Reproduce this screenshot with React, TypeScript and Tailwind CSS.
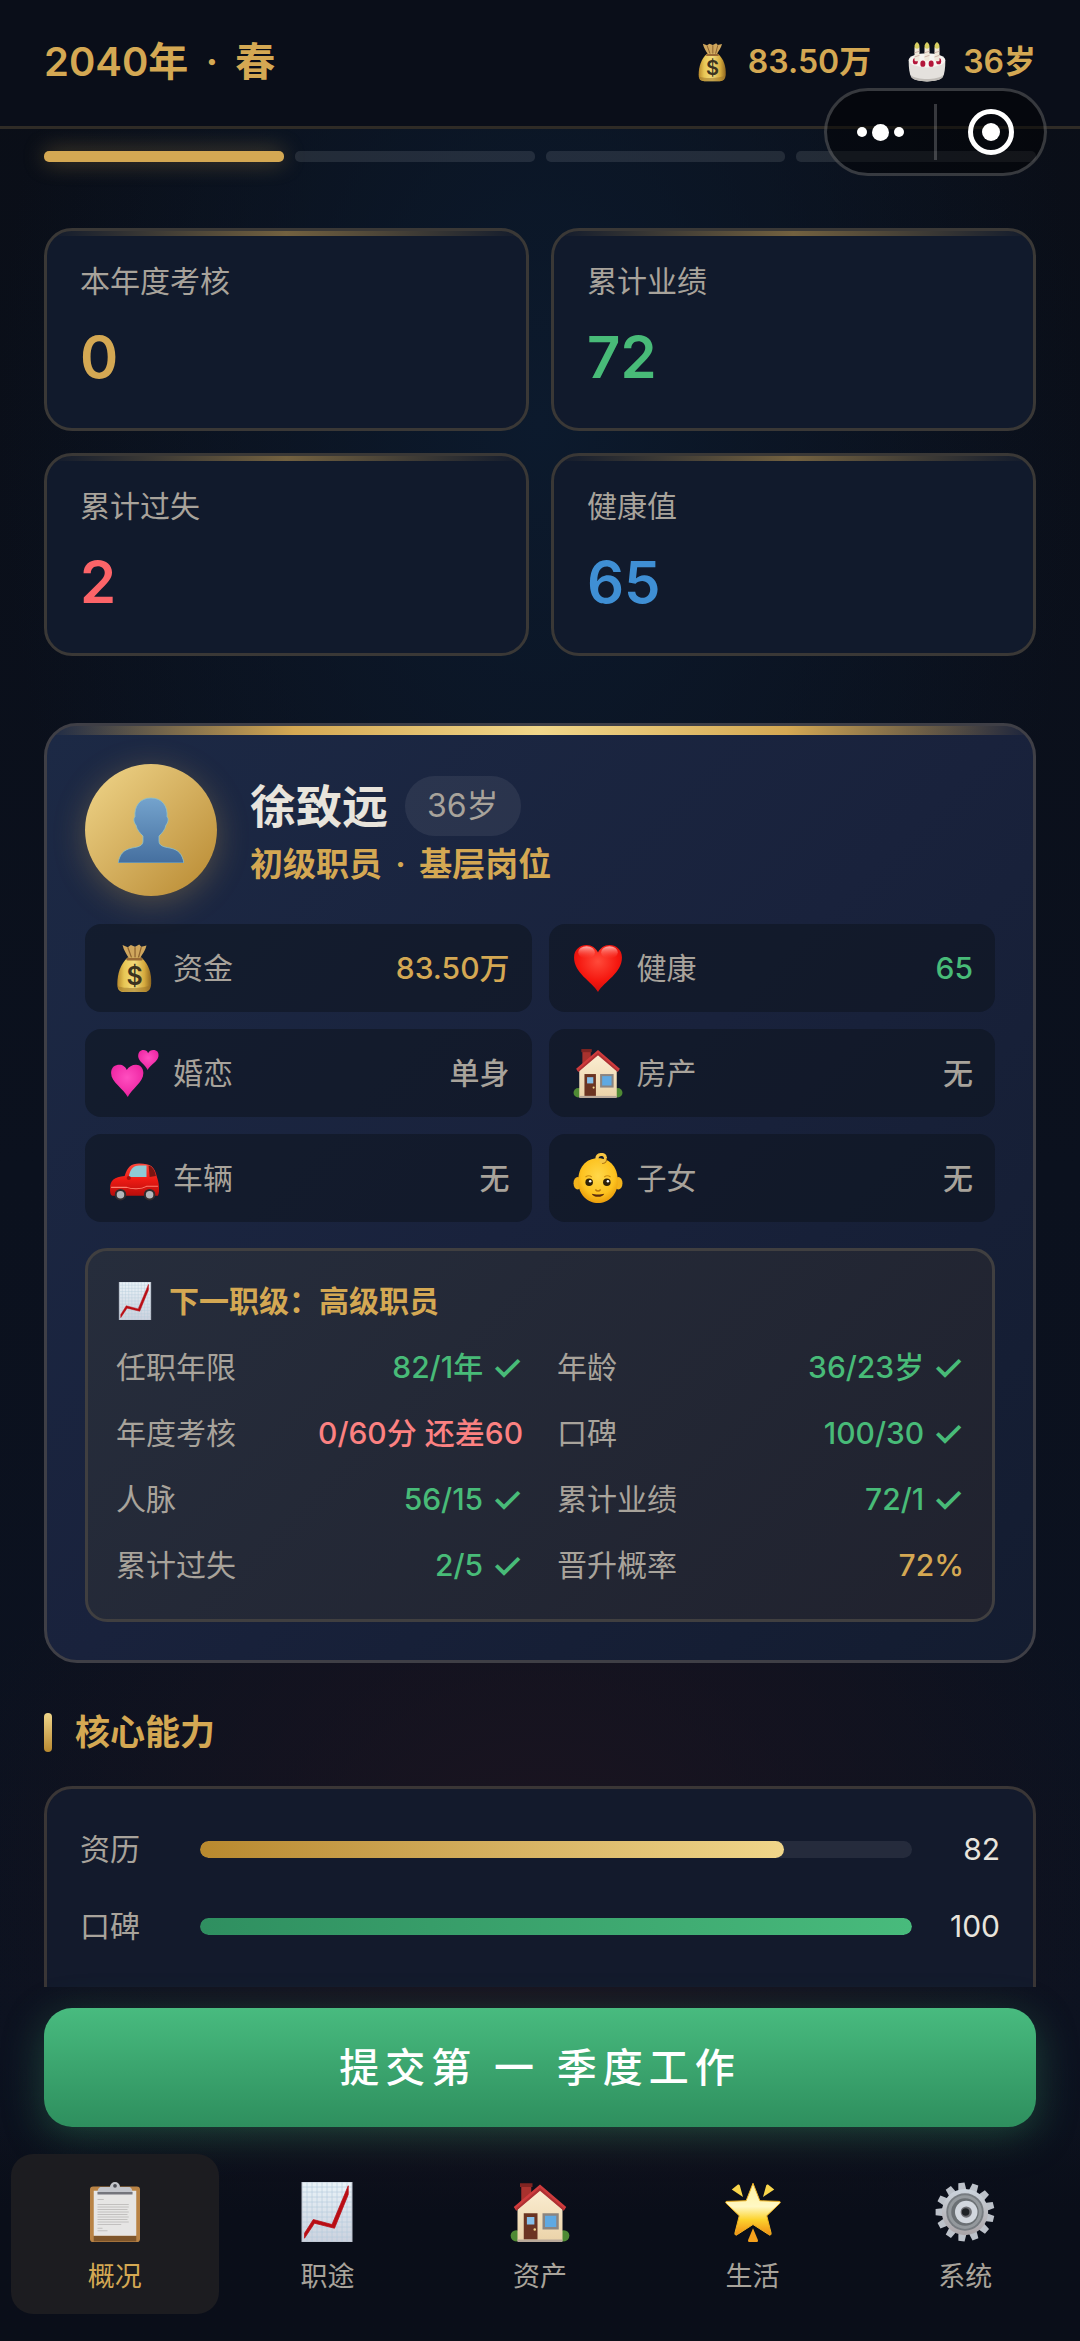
import React from "react";

type IconProps = { className?: string };

function MoneyBag({ className }: IconProps) {
  return (
    <svg viewBox="0 0 48 48" className={className} aria-hidden="true">
      <defs>
        <linearGradient id="bag" x1="0" x2="1" y1="0" y2="0">
          <stop offset="0" stopColor="#b98a2c" />
          <stop offset=".2" stopColor="#e8c654" />
          <stop offset=".5" stopColor="#f3dc7c" />
          <stop offset=".8" stopColor="#d5aa3d" />
          <stop offset="1" stopColor="#8f6620" />
        </linearGradient>
      </defs>
      <path d="M13 2l5 2 3-2 4 1.500 4-2 2 2 5-1c-1 5-4 8-6 12H19C17 11 14 7 13 2z" fill="#cfa65d" />
      <path d="M18 4l4 11M25 4v11M31 4l-3 11" stroke="#8d6330" strokeWidth="1.2" fill="none" />
      <path d="M18 14h13c7 6 10 15 9.500 25-.5 6-3 8-7 8H15c-5 0-7-2-7-8 0-9 3-19 10-25z" fill="url(#bag)" />
      <path d="M8 41c2 5 5 6 8 6h17c4 0 6-2 7-7-5 4-28 4-32 1z" fill="#9c742a" opacity=".55" />
      <path d="M18 15.500h13" stroke="#9a6a35" strokeWidth="2.500" strokeLinecap="round" />
      <text x="24.500" y="40" textAnchor="middle" fontSize="24" fontWeight="600" fill="#3b3320" className="font-[Inter,sans-serif]">$</text>
    </svg>
  );
}

function Cake({ className }: IconProps) {
  return (
    <svg viewBox="0 0 48 48" className={className} aria-hidden="true">
      <path d="M2 23c0 8 1 15 3 19 5 7 33 7 38 0 2-4 3-11 3-19z" fill="#e4e1dd" />
      <path d="M5 40c6 6 32 6 38 0v2c-5 7-33 7-38 0z" fill="#bfbbb6" />
      <ellipse cx="24" cy="22" rx="22" ry="8.500" fill="#f7f4f1" />
      {[10, 19, 29, 38].map((x, i) => (
        <ellipse key={x} cx={x} cy={i === 0 || i === 3 ? 23 : 26} rx="3" ry="3.800" fill="#b3163a" />
      ))}
      {[12, 24, 36].map((x) => (
        <g key={x}>
          <rect x={x - 3} y="6" width="6" height="17" rx="1" fill="#f0e8da" />
          <path d={`M${x - 3} 13l6-2M${x - 3} 18l6-2`} stroke="#c9a7a0" strokeWidth="1" />
          <path d={`M${x} 0c4 3 4 8 0 8s-4-5 0-8z`} fill="#d8cf62" />
        </g>
      ))}
    </svg>
  );
}

function Person({ className }: IconProps) {
  return (
    <svg viewBox="0 0 66 66" className={className} aria-hidden="true">
      <defs>
        <linearGradient id="person" x1="0" x2="0" y1="0" y2="1">
          <stop offset="0" stopColor="#74a3cd" />
          <stop offset="1" stopColor="#456f9f" />
        </linearGradient>
      </defs>
      <path
        d="M33 1C22 1 16 9 17 20c-2 1-1 6 1 8 1 5 4 8 7 11v5c0 5-5 6-11 7C5 53 2 57 0 66h66c-2-9-5-13-14-15-6-1-11-2-11-7v-5c3-3 6-6 7-11 2-2 3-7 1-8C50 9 44 1 33 1z"
        fill="url(#person)"
        stroke="#8fc1c9"
        strokeWidth=".8"
      />
    </svg>
  );
}

function Heart({ className }: IconProps) {
  return (
    <svg viewBox="0 0 48 48" className={className} aria-hidden="true">
      <defs>
        <radialGradient id="heart" cx=".5" cy=".35" r=".7">
          <stop offset="0" stopColor="#ff4a3a" />
          <stop offset=".6" stopColor="#f5170f" />
          <stop offset="1" stopColor="#c80d0d" />
        </radialGradient>
        <linearGradient id="heartShine" x1="0" x2="0" y1="0" y2="1">
          <stop offset="0" stopColor="#ffd0cc" />
          <stop offset="1" stopColor="#ff4a3a" stopOpacity="0" />
        </linearGradient>
      </defs>
      <path d="M24 47C18 37 1 29 1 14 1 6 7 2 13 2c5 0 9 3 11 7 2-4 6-7 11-7 6 0 12 4 12 12 0 15-17 23-23 33z" fill="url(#heart)" />
      <ellipse cx="13" cy="9" rx="8" ry="6" fill="url(#heartShine)" opacity=".85" />
      <ellipse cx="35" cy="9" rx="8" ry="6" fill="url(#heartShine)" opacity=".85" />
    </svg>
  );
}

function TwoHearts({ className }: IconProps) {
  return (
    <svg viewBox="0 0 48 48" className={className} aria-hidden="true">
      <defs>
        <radialGradient id="pink" cx=".5" cy=".4" r=".7">
          <stop offset="0" stopColor="#ff4fc0" />
          <stop offset=".7" stopColor="#f02aa6" />
          <stop offset="1" stopColor="#c9178a" />
        </radialGradient>
      </defs>
      <path d="M18 47C14 39 2 33 2 24c0-6 4-8 8-8 3 0 6 2 7 5 2-3 5-5 9-5 4 0 7 3 7 8 0 9-11 15-15 23z" fill="url(#pink)" />
      <path d="M37 21c-2-5-9-8-9-13 0-4 2-6 5-6 2 0 4 1 4.500 3C38.500 3 40.500 2 42.500 2 46 2 48 4 47.500 8 47 13 40 16 37 21z" fill="url(#pink)" />
    </svg>
  );
}

function House({ className }: IconProps) {
  return (
    <svg viewBox="0 0 48 48" className={className} aria-hidden="true">
      <defs>
        <linearGradient id="wall" x1="0" x2="0" y1="0" y2="1">
          <stop offset="0" stopColor="#fbeed3" />
          <stop offset="1" stopColor="#ebd3a9" />
        </linearGradient>
      </defs>
      <ellipse cx="5" cy="43" rx="4.500" ry="4.500" fill="#4f8a34" />
      <ellipse cx="43" cy="43" rx="4.500" ry="4.500" fill="#4f8a34" />
      <rect x="9" y="2" width="8" height="16" fill="#a8322e" />
      <rect x="8" y="1" width="10" height="3" fill="#7f2422" />
      <path d="M24 5L6 22v25h36V22z" fill="url(#wall)" />
      <path d="M24 2L3 20l2 3L24 7l19 16 2-3z" fill="#cf3b3c" />
      <path d="M24 7L5 23v-2L24 4.500 43 21v2z" fill="#8e2629" opacity=".5" />
      <rect x="11" y="25" width="11" height="21" fill="#6b3422" />
      <rect x="13.500" y="28" width="6" height="6" fill="#86bfe9" />
      <circle cx="19.800" cy="38" r="1" fill="#f1d48b" />
      <rect x="26" y="25" width="13" height="13" fill="#8b8580" />
      <rect x="28" y="27" width="9" height="9" fill="#5fa9e2" />
      <rect x="6" y="46" width="36" height="2" fill="#b9a99a" />
    </svg>
  );
}

function Car({ className }: IconProps) {
  return (
    <svg viewBox="0 0 48 48" className={className} aria-hidden="true">
      <defs>
        <linearGradient id="car" x1="0" x2="0" y1="0" y2="1">
          <stop offset="0" stopColor="#ff4a3c" />
          <stop offset=".5" stopColor="#ee1b14" />
          <stop offset="1" stopColor="#b80d0b" />
        </linearGradient>
      </defs>
      <path d="M1 34c0-8 4-11 14-12 3-9 6-12 14-12 11 0 15 3 17 13 2 5 3 14 1 18H3c-2-1-2-4-2-7z" fill="url(#car)" />
      <path d="M19 23c1-7 4-11 10-11h7v11z" fill="#8ecbd6" />
      <path d="M38 12c4 1 6 5 7 10l-6 1z" fill="#7a1512" />
      <path d="M2 33h15c5 2 14 2 19-1h11" stroke="#ff7d6d" strokeWidth="1" fill="none" />
      <rect x="17" y="22" width="4" height="4" rx="2" fill="#a80f0c" />
      <circle cx="11" cy="40" r="5.500" fill="#332d2e" />
      <circle cx="11" cy="40" r="3.600" fill="#b5b7ba" />
      <circle cx="39" cy="40" r="5.500" fill="#332d2e" />
      <circle cx="39" cy="40" r="3.600" fill="#b5b7ba" />
    </svg>
  );
}

function Baby({ className }: IconProps) {
  return (
    <svg viewBox="0 0 48 48" className={className} aria-hidden="true">
      <defs>
        <radialGradient id="face" cx=".5" cy=".4" r=".6">
          <stop offset="0" stopColor="#ffd84a" />
          <stop offset=".7" stopColor="#fdc21f" />
          <stop offset="1" stopColor="#ea9d0c" />
        </radialGradient>
      </defs>
      <ellipse cx="4.500" cy="29" rx="4" ry="6" fill="#f3b31c" />
      <ellipse cx="43.500" cy="29" rx="4" ry="6" fill="#f3b31c" />
      <path d="M24 5C12 5 5 14 5 27c0 13 9 21 19 21s19-8 19-21C43 14 36 5 24 5z" fill="url(#face)" />
      <path d="M23 5c0-4 7-5 8-1 1 3-2 5-4 4" fill="none" stroke="#f6c544" strokeWidth="3" strokeLinecap="round" />
      <path d="M28 10c3 0 5-2 4-5" fill="none" stroke="#a76f12" strokeWidth="1" />
      <path d="M12 23c2-1.500 4-1.500 6 0M30 23c2-1.500 4-1.500 6 0" fill="none" stroke="#c98a10" strokeWidth="1" />
      <circle cx="15.500" cy="28" r="3.600" fill="#2e2109" />
      <circle cx="32.500" cy="28" r="3.600" fill="#2e2109" />
      <circle cx="16.500" cy="27" r="1.200" fill="#fff" />
      <circle cx="33.500" cy="27" r="1.200" fill="#fff" />
      <path d="M21.500 35c1.500 2 3.500 2 5 0" fill="none" stroke="#b9780c" strokeWidth="1.400" />
      <path d="M18 39c3 1 9 1 12 0-1 4-11 4-12 0z" fill="#5b2b0c" />
    </svg>
  );
}

function Chart({ className }: IconProps) {
  return (
    <svg viewBox="0 0 48 48" className={className} aria-hidden="true">
      <defs>
        <linearGradient id="paper" x1="0" x2="0" y1="0" y2="1">
          <stop offset="0" stopColor="#eaf3f8" />
          <stop offset="1" stopColor="#ccd2de" />
        </linearGradient>
      </defs>
      <rect x="4" y="0" width="40" height="48" fill="url(#paper)" stroke="#b9bfcb" strokeWidth=".8" />
      <path
        d="M8 0v48M12 0v48M16 0v48M20 0v48M24 0v48M28 0v48M32 0v48M36 0v48M40 0v48M4 4h40M4 8h40M4 12h40M4 16h40M4 20h40M4 24h40M4 28h40M4 32h40M4 36h40M4 40h40M4 44h40"
        stroke="#b6cbdc"
        strokeWidth=".5"
      />
      <path d="M6 45v-4l7-11 15 4L41 3v7L30 37l-16-4z" fill="#b90d14" stroke="#b90d14" strokeWidth=".6" />
    </svg>
  );
}

function Clipboard({ className }: IconProps) {
  return (
    <svg viewBox="0 0 48 48" className={className} aria-hidden="true">
      <rect x="4" y="3.500" width="40" height="44.500" rx="2.500" fill="#b98345" />
      <rect x="7" y="43" width="34" height="4.500" fill="#7f562b" />
      <rect x="7" y="7" width="34" height="36" fill="#e6e5e4" />
      <path d="M24 0a4 4 0 0 0-4 4h-7c-2 0-3 2-3 5h28c0-3-1-5-3-5h-7a4 4 0 0 0-4-4z" fill="#c3c5cb" />
      <circle cx="24" cy="3" r="1.500" fill="#4b4d55" />
      <rect x="10" y="8" width="28" height="2" fill="#74757c" />
      <path
        d="M10 14h5M10 18h25M10 20h25M10 22h24M10 24h25M10 26h24M10 28h25M10 30h24M10 32h25M10 34h19M10 37h4M10 39h8"
        stroke="#c2c0bf"
        strokeWidth=".8"
      />
    </svg>
  );
}

function Star({ className }: IconProps) {
  return (
    <svg viewBox="0 0 48 48" className={className} aria-hidden="true">
      <defs>
        <linearGradient id="star" x1="0" x2="0" y1="0" y2="1">
          <stop offset="0" stopColor="#fff3a0" />
          <stop offset=".45" stopColor="#fff8c4" />
          <stop offset=".7" stopColor="#fdd32e" />
          <stop offset="1" stopColor="#f08c13" />
        </linearGradient>
      </defs>
      <path d="M24 1l5.500 14L45 15.500c1 0 1 1 .5 1.500L35 27l3.500 14c0 1.500-1 2-2 1L24 34l-12.500 8c-1 1-2 .5-2-1L13 27 2.500 17c-.5-.500-.5-1.500.5-1.500L18.500 15z" fill="url(#star)" stroke="#f3b523" strokeWidth=".8" strokeLinejoin="round" />
      <path d="M7 6l5-4c1 0 1.500.5 1.500 1L16 12zM41 6l-5-4c-1 0-1.500.5-1.500 1L32 12z" fill="#f9d64c" />
      <path d="M24 37l4 9.500c0 1-.5 1.500-1 1.500h-6c-.5 0-1-.5-1-1.500z" fill="#f4a01d" />
    </svg>
  );
}

function Gear({ className }: IconProps) {
  return (
    <svg viewBox="0 0 48 48" className={className} aria-hidden="true">
      <defs>
        <linearGradient id="gear" x1="0" x2="0" y1="0" y2="1">
          <stop offset="0" stopColor="#cdd5de" />
          <stop offset="1" stopColor="#aaa4a7" />
        </linearGradient>
      </defs>
      {Array.from({ length: 13 }, (_, i) => (
        <path key={i} d="M20.500 9l1-8.500h5l1 8.500z" fill="#bcc1c9" transform={`rotate(${i * (360 / 13) - 7} 24 24)`} />
      ))}
      <circle cx="24" cy="24" r="18.500" fill="url(#gear)" />
      <circle cx="24" cy="24" r="15" fill="#777c81" />
      <circle cx="24" cy="24" r="13.500" fill="#94999d" />
      <circle cx="24" cy="24" r="11" fill="#6b7074" />
      <circle cx="25" cy="24" r="9" fill="#d2d7de" />
      <circle cx="25" cy="24" r="4.500" fill="#6d6e73" />
      <circle cx="24.500" cy="24" r="3" fill="#1f2326" />
    </svg>
  );
}

const stats = [
  { label: "本年度考核", value: "0", color: "text-[#d4a853]" },
  { label: "累计业绩", value: "72", color: "text-[#48bb78]" },
  { label: "累计过失", value: "2", color: "text-[#fc6468]" },
  { label: "健康值", value: "65", color: "text-[#3f8fd4]" },
];

const facts = [
  { Icon: MoneyBag, label: "资金", value: "83.50万", color: "text-[#d4a853]" },
  { Icon: Heart, label: "健康", value: "65", color: "text-[#48bb78]" },
  { Icon: TwoHearts, label: "婚恋", value: "单身", color: "text-[#a8a39b]" },
  { Icon: House, label: "房产", value: "无", color: "text-[#a8a39b]" },
  { Icon: Car, label: "车辆", value: "无", color: "text-[#a8a39b]" },
  { Icon: Baby, label: "子女", value: "无", color: "text-[#a8a39b]" },
];

const requirements = [
  { label: "任职年限", value: "82/1年", met: true, color: "text-[#48bb78]" },
  { label: "年龄", value: "36/23岁", met: true, color: "text-[#48bb78]" },
  { label: "年度考核", value: "0/60分 还差60", met: false, color: "text-[#fc8181]" },
  { label: "口碑", value: "100/30", met: true, color: "text-[#48bb78]" },
  { label: "人脉", value: "56/15", met: true, color: "text-[#48bb78]" },
  { label: "累计业绩", value: "72/1", met: true, color: "text-[#48bb78]" },
  { label: "累计过失", value: "2/5", met: true, color: "text-[#48bb78]" },
  { label: "晋升概率", value: "72%", met: false, color: "text-[#d4a853]" },
];

const abilities = [
  { label: "资历", value: 82, fill: "bg-linear-to-r from-[#b8892e] to-[#f0d68a]" },
  { label: "口碑", value: 100, fill: "bg-linear-to-r from-[#2f8f60] to-[#48bb7c]" },
];

const tabs = [
  { Icon: Clipboard, label: "概况", active: true },
  { Icon: Chart, label: "职途", active: false },
  { Icon: House, label: "资产", active: false },
  { Icon: Star, label: "生活", active: false },
  { Icon: Gear, label: "系统", active: false },
];

function Header() {
  return (
    <header className="flex items-center justify-between border-b-3 border-[#2f2b26] bg-[#0a0e19] px-11 pt-8 pb-[34px] leading-[60px] font-semibold text-[#d4a853]">
      <h1 className="text-[40px]">
        2040年<span className="mx-[7px]"> · </span>春
      </h1>
      <div className="flex items-center gap-9 text-[32px]">
        <span className="flex items-center gap-4">
          <MoneyBag className="size-10" />
          83.50万
        </span>
        <span className="flex items-center gap-4">
          <Cake className="size-10" />
          36岁
        </span>
      </div>
    </header>
  );
}

function Capsule() {
  return (
    <div className="absolute top-[88px] right-[33px] flex h-[88px] w-[223px] items-center rounded-full border-3 border-white/20 bg-black/45">
      <button type="button" aria-label="更多" className="flex flex-1 items-center justify-center gap-[5px]">
        <span className="size-[10px] rounded-full bg-white" />
        <span className="size-[17px] rounded-full bg-white" />
        <span className="size-[10px] rounded-full bg-white" />
      </button>
      <span className="h-14 w-[3px] bg-white/20" />
      <button type="button" aria-label="关闭" className="flex flex-1 items-center justify-center">
        <span className="flex size-[46px] items-center justify-center rounded-full border-5 border-white">
          <span className="size-[18px] rounded-full bg-white" />
        </span>
      </button>
    </div>
  );
}

function ProfileCard() {
  return (
    <section className="relative mt-[67px] overflow-hidden rounded-[33px] border-3 border-[#3f3f46] bg-linear-135 from-[#1c2945] via-[#19223c] to-[#131c30] p-[38px]">
      <div className="absolute inset-x-0 top-0 h-[9px] bg-[linear-gradient(90deg,transparent,#d4a853_25%,#f0d68a_50%,#d4a853_75%,transparent)]" />
      <div className="flex items-center gap-[33px]">
        <div className="flex size-[132px] items-center justify-center rounded-full bg-linear-135 from-[#f0d68a] to-[#b8892e] shadow-[0_6px_32px_rgba(212,168,83,0.3)]">
          <Person className="size-[66px]" />
        </div>
        <div className="pt-2">
          <div className="flex items-center gap-[17px]">
            <h2 className="text-[46px] leading-[60px] font-bold text-[#e8e4dc]">徐致远</h2>
            <span className="rounded-[30px] bg-white/7 px-[22px] text-[32px] leading-[60px] text-[#a8a39b]">36岁</span>
          </div>
          <p className="text-[33px] leading-[56px] font-semibold text-[#d4a853]">
            初级职员<span className="mx-[5px]"> · </span>基层岗位
          </p>
        </div>
      </div>

      <dl className="mt-7 grid grid-cols-2 gap-[17px] text-[30px]">
        {facts.map(({ Icon, label, value, color }) => (
          <div key={label} className="flex h-[88px] items-center rounded-2xl bg-[#0c111a]/50 pr-[22px] pl-6">
            <Icon className="mr-[14px] size-[50px]" />
            <dt className="text-[#a8a39b]">{label}</dt>
            <dd className={`ml-auto font-medium ${color}`}>{value}</dd>
          </div>
        ))}
      </dl>

      <section className="mt-[26px] rounded-[22px] border-3 border-[#403f40] bg-linear-135 from-[#262d3c] to-[#20222e] px-7 pt-7 pb-[31px] text-[30px]">
        <h3 className="flex items-center gap-[15px] leading-[44px] font-bold text-[#d4a853]">
          <Chart className="size-[38px]" />
          下一职级：高级职员
        </h3>
        <dl className="mt-[21px] grid grid-cols-2 gap-x-[34px] gap-y-5 leading-[46px]">
          {requirements.map(({ label, value, met, color }) => (
            <div key={label} className="flex justify-between">
              <dt className="text-[#a8a39b]">{label}</dt>
              <dd className={`flex gap-2 font-medium ${color}`}>
                {value}
                {met && <span className="text-[36px]">✓</span>}
              </dd>
            </div>
          ))}
        </dl>
      </section>
    </section>
  );
}

export default function App() {
  return (
    <div className="relative flex h-screen flex-col overflow-hidden bg-[radial-gradient(ellipse_50%_38%_at_50%_18%,#0c1a2d,transparent),radial-gradient(ellipse_55%_22%_at_50%_80%,#1b1420,transparent),linear-gradient(180deg,#0a0e17,#0b111e_50%,#0c1220_88%,#0a0e17)] font-[Inter,'Noto_Sans_CJK_SC',sans-serif]">
      <Header />

      <main className="min-h-0 flex-1 overflow-y-auto px-11 pt-[22px] [scrollbar-width:none]">
        <div role="progressbar" aria-label="季度" aria-valuenow={1} aria-valuemin={0} aria-valuemax={4} className="grid grid-cols-4 gap-[11px]">
          <span className="h-[11px] rounded-[5px] bg-[#d4a853] shadow-[0_0_22px_rgba(212,168,83,0.4)]" />
          <span className="h-[11px] rounded-[5px] bg-white/10" />
          <span className="h-[11px] rounded-[5px] bg-white/10" />
          <span className="h-[11px] rounded-[5px] bg-white/10" />
        </div>

        <dl className="mt-[66px] grid grid-cols-2 gap-[22px]">
          {stats.map(({ label, value, color }) => (
            <div key={label} className="relative overflow-hidden rounded-[28px] border-3 border-[#3a3836] bg-[#111a2c] p-[33px]">
              <div className="absolute inset-x-0 top-0 h-[5px] bg-linear-to-r from-transparent via-[#d4a853]/50 to-transparent" />
              <dt className="text-[30px] leading-[34px] text-[#a8a39b]">{label}</dt>
              <dd className={`mt-[22px] text-[58px] leading-[75px] font-semibold ${color}`}>{value}</dd>
            </div>
          ))}
        </dl>

        <ProfileCard />

        <h2 className="mt-[49px] flex items-center gap-[23px] text-[35px] leading-10 font-semibold text-[#d4a853]">
          <span className="h-[39px] w-2 rounded-sm bg-linear-to-b from-[#f0d68a] to-[#b8892e]" />
          核心能力
        </h2>
        <div className="mt-[34px] flex flex-col gap-[23px] rounded-[28px] border-3 border-[#3a3636] bg-[#131a2c] px-[33px] pt-[33px] pb-[120px] text-[30px] leading-[54px]">
          {abilities.map(({ label, value, fill }) => (
            <div key={label} className="flex items-center">
              <span className="w-[120px] text-[#a8a39b]">{label}</span>
              <div role="progressbar" aria-label={label} aria-valuenow={value} aria-valuemin={0} aria-valuemax={100} className="h-[17px] flex-1 overflow-hidden rounded-full bg-white/8">
                <div className={`h-full rounded-full ${fill}`} style={{ width: `${value}%` }} />
              </div>
              <span className="w-[88px] text-right text-[#e8e4dc]">{value}</span>
            </div>
          ))}
        </div>
      </main>

      <footer>
        <div className="px-11 pt-[21px]">
          <button type="button" className="h-[119px] w-full rounded-[28px] bg-linear-to-b from-[#48bb7f] to-[#2e8f5e] text-[40px] font-medium tracking-[0.15em] text-white shadow-[0_10px_40px_rgba(56,161,105,0.35)]">
            提交第 一 季度工作
          </button>
        </div>
        <nav className="relative grid grid-cols-5 gap-[5px] bg-linear-to-b from-transparent to-[#0a0e19] to-40% px-[11px] py-[27px]">
          {tabs.map(({ Icon, label, active }) => (
            <button
              key={label}
              type="button"
              aria-current={active ? "page" : undefined}
              className={`flex flex-col items-center rounded-[22px] pt-7 pb-[19px] ${active ? "bg-[#1c1c20] text-[#d4a853]" : "text-[#a8a39b]"}`}
            >
              <Icon className="size-[60px]" />
              <span className="mt-[17px] text-[27px] leading-9">{label}</span>
            </button>
          ))}
        </nav>
      </footer>

      <Capsule />
    </div>
  );
}
